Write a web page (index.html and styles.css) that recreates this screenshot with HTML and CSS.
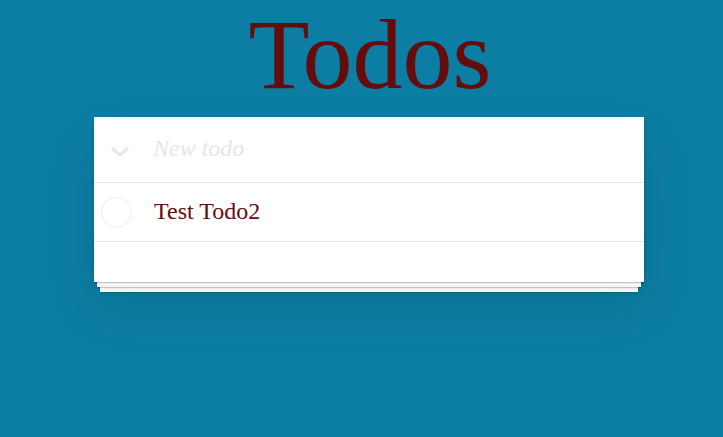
FILE: index.html
```html
<!DOCTYPE html>
<html>
<head>
<meta charset="utf-8">
<link rel="stylesheet" href="styles.css">
</head>
<body>
<section class="page">
  <h1 class="title">Todos</h1>
  <div class="todoapp">
    <header class="header">
      <span class="toggle-all">
        <svg width="18" height="10" viewBox="0 0 18 10"><path d="M1.5 1.5 L9 8 L16.5 1.5" fill="none" stroke="#e6e6e6" stroke-width="2.6" stroke-linecap="round" stroke-linejoin="round"/></svg>
      </span>
      <span class="new-todo">New todo</span>
    </header>
    <ul class="todo-list">
      <li class="todo">
        <span class="check"></span>
        <span class="label">Test Todo2</span>
      </li>
    </ul>
    <footer class="footer"></footer>
  </div>
</section>
</body>
</html>
```
FILE: styles.css
```css
html, body {
  margin: 0;
  padding: 0;
}
body {
  background: #0c7ea3;
  font-family: "Liberation Serif", "Times New Roman", serif;
  height: 437px;
  overflow: hidden;
}
.page {
  width: 550px;
  margin-left: 94px;
}
.title {
  margin: -1px 0 7px 2px;
  font-size: 100px;
  line-height: 111px;
  font-weight: normal;
  text-align: center;
  color: #650d0d;
}
.todoapp {
  background: #fff;
  position: relative;
  box-shadow: 0 2px 4px 0 rgba(0,0,0,0.2), 0 25px 50px 0 rgba(0,0,0,0.1);
}
.header {
  display: flex;
  align-items: center;
  height: 65px;
  border-bottom: 1px solid #e6e6e6;
}
.toggle-all {
  width: 60px;
  display: flex;
  justify-content: center;
  padding-top: 4px;
  padding-right: 8px;
  box-sizing: border-box;
}
.toggle-all svg { display: block; }
.new-todo {
  font-size: 24px;
  font-style: italic;
  color: #e6e6e6;
  line-height: 33.6px;
  padding-bottom: 2px;
  margin-left: -1px;
}
.todo-list {
  list-style: none;
  margin: 0;
  padding: 0;
}
.todo {
  display: flex;
  align-items: center;
  height: 58px;
  border-bottom: 1px solid #e6e6e6;
}
.check {
  width: 29px;
  height: 29px;
  border: 1px solid #ededed;
  border-radius: 50%;
  margin-left: 7px;
  margin-right: 22px;
  flex: none;
}
.label {
  font-size: 24px;
  line-height: 28.8px;
  color: #650d0d;
  padding-bottom: 1px;
}
.footer {
  height: 40px;
  position: relative;
}
.footer::before {
  content: "";
  position: absolute;
  left: 0;
  right: 0;
  bottom: 0;
  height: 50px;
  overflow: hidden;
  box-shadow: 0 1px 1px rgba(0,0,0,0.2),
              0 8px 0 -3px #f6f6f6,
              0 9px 1px -3px rgba(0,0,0,0.2),
              0 16px 0 -6px #f6f6f6,
              0 17px 2px -6px rgba(0,0,0,0.2);
}
```
